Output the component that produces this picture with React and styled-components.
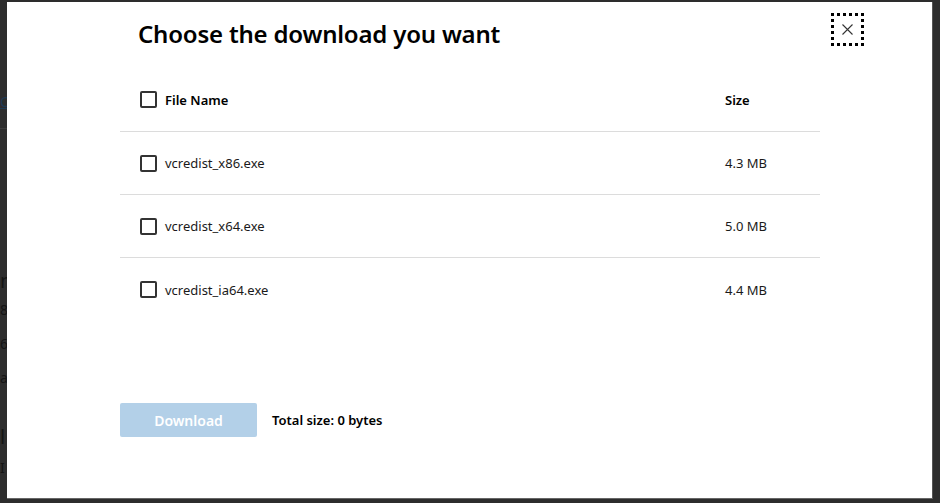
import React from "react";
import styled, { createGlobalStyle } from "styled-components";

const GlobalStyle = createGlobalStyle`
  html, body {
    margin: 0;
    padding: 0;
    background: #2d2d2d;
    font-family: "Noto Sans", "Open Sans", Arial, sans-serif;
  }
`;

const files = [
  { name: "vcredist_x86.exe", size: "4.3 MB" },
  { name: "vcredist_x64.exe", size: "5.0 MB" },
  { name: "vcredist_ia64.exe", size: "4.4 MB" },
];

export default function App() {
  return (
    <>
      <GlobalStyle />
      <Screen>
        <BackPage>
          <BackLink>Co</BackLink>
          <BackRule />
          <BackHeading>n</BackHeading>
          <BackText $gap={6}>8</BackText>
          <BackText $gap={14}>6</BackText>
          <BackText $gap={14}>at</BackText>
          <BackHeading $gap={36}>l</BackHeading>
          <BackText $gap={8}>I</BackText>
        </BackPage>
        <Dialog>
          <TopBar>
            <Title>Choose the download you want</Title>
            <CloseButton aria-label="Close">
              <svg width="11" height="11" viewBox="0 0 11 11">
                <path d="M0.5 0.5 L10.5 10.5 M10.5 0.5 L0.5 10.5" stroke="#333" strokeWidth="1.1" />
              </svg>
            </CloseButton>
          </TopBar>
          <Table>
            <HeaderRow>
              <NameCell>
                <Box />
                <HeadLabel>File Name</HeadLabel>
              </NameCell>
              <HeadLabel>Size</HeadLabel>
            </HeaderRow>
            {files.map((f) => (
              <Row key={f.name}>
                <NameCell>
                  <Box />
                  <CellText>{f.name}</CellText>
                </NameCell>
                <CellText>{f.size}</CellText>
              </Row>
            ))}
          </Table>
          <Footer>
            <DownloadButton disabled>Download</DownloadButton>
            <Total>Total size: 0 bytes</Total>
          </Footer>
        </Dialog>
      </Screen>
    </>
  );
}

const Screen = styled.div`
  display: flex;
  height: 503px;
  box-sizing: border-box;
  padding: 2px 7px 4px 0;
  background: #2d2d2d;
`;

const BackPage = styled.div`
  width: 7px;
  overflow: hidden;
  display: flex;
  flex-direction: column;
  white-space: nowrap;
  padding-top: 90px;
  color: #141414;
  font-size: 14px;
  line-height: 20px;
`;

const BackLink = styled.div`
  color: #1d3a55;
  text-decoration: underline;
`;

const BackRule = styled.div`
  height: 1px;
  margin-top: 16px;
  background: #3d3d3d;
`;

const BackHeading = styled.div`
  margin-top: ${(p) => p.$gap ?? 139}px;
  font-size: 20px;
  line-height: 26px;
`;

const BackText = styled.div`
  margin-top: ${(p) => p.$gap}px;
`;

const Dialog = styled.div`
  flex: 1;
  background: #fff;
  border-right: 1px solid #555;
  border-bottom: 1px solid #666;
  display: flex;
  flex-direction: column;
`;

const TopBar = styled.div`
  display: flex;
  align-items: flex-start;
  padding: 11px 68px 0 131px;
`;

const Title = styled.h1`
  flex: 1;
  margin: 5px 0 0;
  font-size: 24px;
  line-height: 32px;
  font-weight: 600;
  color: #000;
  letter-spacing: -0.2px;
`;

const CloseButton = styled.button`
  width: 33px;
  height: 33px;
  padding: 0;
  background: #fff;
  border: 3px dotted #000;
  display: flex;
  align-items: center;
  justify-content: center;
  cursor: pointer;
`;

const Table = styled.div`
  width: 700px;
  margin: 20px 0 0 113px;
`;

const RowBase = styled.div`
  display: grid;
  grid-template-columns: 1fr 95px;
  align-items: center;
  padding-left: 20px;
  box-sizing: border-box;
  border-bottom: 1px solid #dcdcdc;
  &:last-child {
    border-bottom: none;
  }
`;

const HeaderRow = styled(RowBase)`
  height: 62px;
  padding-bottom: 2px;
`;

const Row = styled(RowBase)`
  height: 63px;
`;

const NameCell = styled.div`
  display: flex;
  align-items: center;
  gap: 8px;
`;

const Box = styled.span`
  width: 17px;
  height: 17px;
  box-sizing: border-box;
  border: 2px solid #333;
  border-radius: 2px;
`;

const HeadLabel = styled.span`
  font-size: 13px;
  font-weight: 600;
  color: #000;
`;

const CellText = styled.span`
  font-size: 13px;
  color: #1a1a1a;
`;

const Footer = styled.div`
  display: flex;
  align-items: center;
  gap: 15px;
  margin: 82px 0 0 113px;
`;

const DownloadButton = styled.button`
  width: 137px;
  height: 34px;
  border: none;
  border-radius: 2px;
  background: #b3d0e8;
  color: #fff;
  font-family: inherit;
  font-size: 14px;
  font-weight: 600;
`;

const Total = styled.span`
  font-size: 13px;
  font-weight: 600;
  color: #000;
`;
